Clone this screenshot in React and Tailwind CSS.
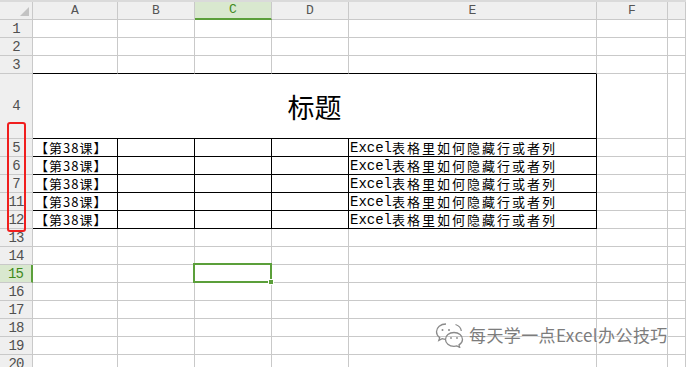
import React from 'react';

const GRID = 'border-[#c9c9c9]';

const cols = [
  { key: 'A', w: 'w-[85px]' },
  { key: 'B', w: 'w-[77px]' },
  { key: 'C', w: 'w-[77px]' },
  { key: 'D', w: 'w-[77px]' },
  { key: 'E', w: 'w-[248px]' },
  { key: 'F', w: 'w-[71px]' },
  { key: '', w: 'flex-1' },
];

const rows = [1, 2, 3, 4, 5, 6, 7, 11, 12, 13, 14, 15, 16, 17, 18, 19, 20];
const boxed = [5, 6, 7, 11, 12];
const tableCols = ['A', 'B', 'C', 'D', 'E'];

const WeChat = () => (
  <svg width="30" height="26" viewBox="0 0 30 26" fill="none" stroke="#8a8a8a" strokeWidth="1.3">
    <path d="M11 2C5.5 2 1.5 5.6 1.5 9.8c0 2.4 1.2 4.4 3.2 5.8l-.9 2.8 3.3-1.7c1.2.4 2.5.6 3.9.6" />
    <circle cx="7.5" cy="8" r="1" fill="#8a8a8a" stroke="none" />
    <circle cx="14" cy="8" r="1" fill="#8a8a8a" stroke="none" />
    <path d="M19 10.5c-5 0-8.5 3.2-8.5 6.9s3.5 6.9 8.5 6.9c1 0 2-.1 2.9-.4l2.8 1.5-.7-2.5c2-1.3 3.5-3.2 3.5-5.5 0-3.7-3.6-6.9-8.5-6.9z" />
    <circle cx="16" cy="16" r=".9" fill="#8a8a8a" stroke="none" />
    <circle cx="22" cy="16" r=".9" fill="#8a8a8a" stroke="none" />
    <path d="M20.5 2.5c3 1 5.5 3.5 5.8 6.5" />
  </svg>
);

function Cell({ row, col }) {
  const inBox = boxed.includes(row) && tableCols.includes(col.key);
  const topOfTable = row === 3 && tableCols.includes(col.key);
  const right = inBox ? 'border-r-black' : 'border-r-[#c9c9c9]';
  const bottom = inBox || topOfTable ? 'border-b-black' : 'border-b-[#c9c9c9]';
  let content = null;
  if (inBox && col.key === 'A') {
    content = (
      <span className="pl-[2px] text-[13px] tracking-[1px] leading-[14px] text-black [font-family:'Noto_Sans_CJK_SC',sans-serif]">
        【第38课】
      </span>
    );
  }
  if (inBox && col.key === 'E') {
    content = (
      <span className="pl-[1px] leading-[14px] text-black flex items-center">
        <span className="text-[14px] [font-family:'Liberation_Mono',monospace]">Excel</span>
        <span className="text-[13px] tracking-[2px] [font-family:'Noto_Sans_CJK_SC',sans-serif]">表格里如何隐藏行或者列</span>
      </span>
    );
  }
  return (
    <div className={`${col.w} shrink-0 h-full border-r border-b ${right} ${bottom} flex items-center overflow-hidden whitespace-nowrap`}>
      {content}
    </div>
  );
}

export default function App() {
  return (
    <div className="relative w-[686px] h-[367px] overflow-hidden bg-white [font-family:'Liberation_Mono',monospace]">
      <div className="h-[2px] bg-[#dadada]" />
      {/* column header */}
      <div className="flex h-[18px]">
        <div className={`w-[33px] shrink-0 bg-[#efefef] border-r border-b ${GRID} relative`}>
          <div className="absolute left-[20px] top-[5px] w-0 h-0 border-l-[9px] border-l-transparent border-b-[9px] border-b-[#c3c3c3]" />
        </div>
        {cols.map((c) =>
          c.key === 'C' ? (
            <div key={c.key} className={`${c.w} shrink-0 bg-[#d9e8cf] border-r ${GRID} border-b-2 border-b-[#5b9f3a] flex items-center justify-center text-[13px] text-[#3f8a1d]`}>
              {c.key}
            </div>
          ) : (
            <div key={c.key} className={`${c.w} shrink-0 bg-[#efefef] border-r border-b ${GRID} flex items-center justify-center text-[13px] text-[#555]`}>
              {c.key}
            </div>
          )
        )}
      </div>

      {rows.map((r) => (
        <div key={r} className={`flex ${r === 4 ? 'h-[65px]' : 'h-[18px]'}`}>
          <div
            className={`w-[33px] shrink-0 border-b ${GRID} flex items-center justify-center text-[14px] leading-[14px] tracking-[-1px] ${
              r === 15
                ? 'bg-[#d9e8cf] text-[#3f8a1d] border-r-2 border-r-[#5b9f3a]'
                : 'bg-[#efefef] text-[#505050] border-r border-r-[#c9c9c9]'
            }`}
          >
            {r}
          </div>
          {r === 4 ? (
            <>
              <div className="w-[564px] shrink-0 h-full border-r border-b border-r-black border-b-black flex items-center justify-center pt-[3px] text-[27px] text-black [font-family:'Noto_Sans_CJK_SC',sans-serif]">
                标题
              </div>
              <div className={`w-[71px] shrink-0 h-full border-r border-b ${GRID}`} />
              <div className={`flex-1 h-full border-r border-b ${GRID}`} />
            </>
          ) : (
            cols.map((c) => <Cell key={c.key || 'G'} row={r} col={c} />)
          )}
        </div>
      ))}

      {/* red annotation around rows 5-12 */}
      <div className="absolute left-[7px] top-[122px] w-[19px] h-[110px] border-2 border-[#f01e1e] rounded-[3px]" />

      {/* active cell C15 */}
      <div className="absolute left-[193px] top-[263px] w-[79px] h-[20px] border-2 border-[#5b9f3a]" />
      <div className="absolute left-[268px] top-[279px] w-[6px] h-[6px] bg-[#5b9f3a] border border-white" />

      {/* watermark */}
      <div className="absolute left-[435px] top-[322px] flex items-center gap-[4px]">
        <WeChat />
        <span className="text-[17px] tracking-[0.4px] text-[#7c7c7c] [text-shadow:0_0_2px_#fff,0_0_2px_#fff] [font-family:'Noto_Sans_CJK_SC',sans-serif]">
          每天学一点Excel办公技巧
        </span>
      </div>
    </div>
  );
}
